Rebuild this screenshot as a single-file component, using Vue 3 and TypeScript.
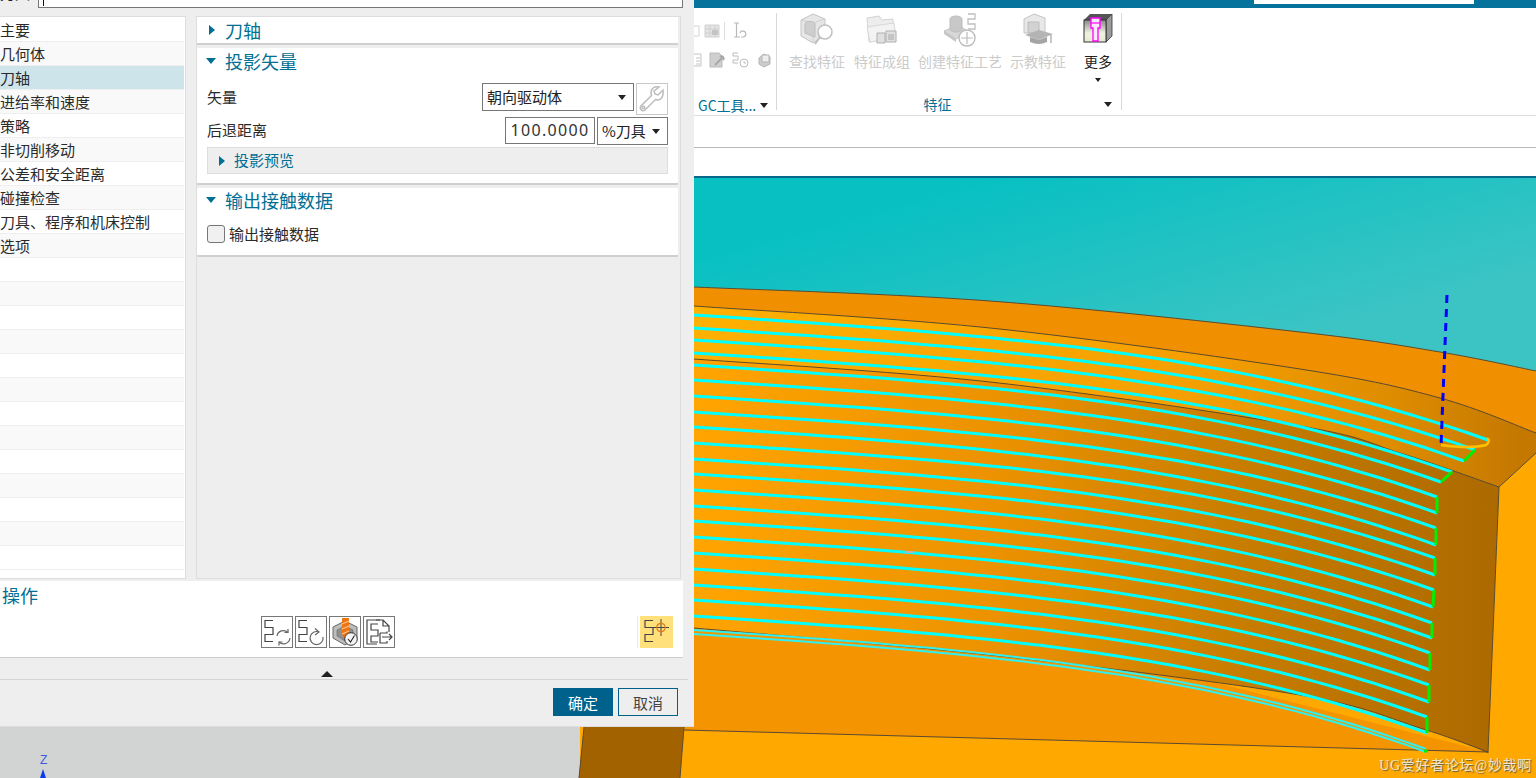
<script setup lang="ts">
type PathLine = { y0: number; x1: number; y1: number };
type Pt = [number, number];

const navItems = ['主要', '几何体', '刀轴', '进给率和速度', '策略', '非切削移动', '公差和安全距离', '碰撞检查', '刀具、程序和机床控制', '选项'];
const navRows = Array.from({ length: 23 }, (_, i) => navItems[i] ?? '');

const featureBtns = ['查找特征', '特征成组', '创建特征工艺', '示教特征'];

const treeD = 'M11 3.5H3V10.5H11V17.5H3V24.5H11';

// toolpath levels: start height at the dialog edge, then where each pass stops
const lines: PathLine[] = [
  { y0: 315, x1: 1488, y1: 440 },
  { y0: 328, x1: 1475, y1: 450 },
  { y0: 340, x1: 1464, y1: 461 },
  { y0: 353, x1: 1452, y1: 472 },
  { y0: 365, x1: 1441, y1: 482 },
  { y0: 380, x1: 1437, y1: 497 },
  { y0: 396, x1: 1437, y1: 513 },
  { y0: 412, x1: 1436, y1: 528 },
  { y0: 427, x1: 1436, y1: 545 },
  { y0: 443, x1: 1435, y1: 558 },
  { y0: 459, x1: 1435, y1: 575 },
  { y0: 474, x1: 1434, y1: 590 },
  { y0: 490, x1: 1433, y1: 607 },
  { y0: 506, x1: 1432, y1: 623 },
  { y0: 521, x1: 1432, y1: 638 },
  { y0: 537, x1: 1430, y1: 653 },
  { y0: 553, x1: 1430, y1: 670 },
  { y0: 569, x1: 1429, y1: 685 },
  { y0: 585, x1: 1429, y1: 702 },
  { y0: 600, x1: 1427, y1: 717 },
  { y0: 616, x1: 1427, y1: 733 },
];

function curve(y0: number, x1: number, y1: number): string {
  const pts: string[] = [];
  for (let i = 0; i <= 40; i++) {
    const t = i / 40;
    const f = 0.42 * t + 0.58 * Math.pow(t, 3.2);
    pts.push(`${(694 + (x1 - 694) * t).toFixed(1)} ${(y0 + (y1 - y0) * f).toFixed(1)}`);
  }
  return 'M' + pts.join('L');
}

// catmull-rom through the measured edge points, returned without the leading move
function smooth(p: Pt[]): string {
  let d = '';
  for (let i = 0; i < p.length - 1; i++) {
    const a = p[Math.max(i - 1, 0)];
    const b = p[i];
    const c = p[i + 1];
    const e = p[Math.min(i + 2, p.length - 1)];
    const c1 = [b[0] + (c[0] - a[0]) / 6, b[1] + (c[1] - a[1]) / 6];
    const c2 = [c[0] - (e[0] - b[0]) / 6, c[1] - (e[1] - b[1]) / 6];
    d += `C${c1[0].toFixed(1)} ${c1[1].toFixed(1)} ${c2[0].toFixed(1)} ${c2[1].toFixed(1)} ${c[0]} ${c[1]}`;
  }
  return d;
}

const edge1: Pt[] = [[694, 287], [990, 301], [1300, 332], [1440, 352], [1536, 371]];
const edge2: Pt[] = [[694, 306], [990, 328], [1300, 369], [1440, 398], [1536, 433]];
const edge3: Pt[] = [[694, 359], [990, 382], [1300, 426], [1400, 453], [1499, 487]];
const edge4: Pt[] = [[694, 628], [1000, 656], [1300, 695], [1420, 728], [1488, 752]];

const edge1D = `M694 287${smooth(edge1)}`;
const edge2D = `M694 306${smooth(edge2)}`;
const edge3D = `M694 359${smooth(edge3)}L1536 453`;
const edge4D = `M694 628${smooth(edge4)}`;
const bandD = `M694 287${smooth(edge1)}V470H694Z`;
const lipD = `M694 306${smooth(edge2)}V453L1499 487${smooth([...edge3].reverse())}Z`;
const wallD = `M694 359${smooth(edge3)}L1488 753${smooth([...edge4].reverse())}Z`;

const cyanPaths = lines.map(l => curve(l.y0, l.x1, l.y1));
const greenLinks = [1, 3, 5, 7, 9, 11, 13, 15, 17, 19].map(i => {
  const a = lines[i];
  const b = lines[i + 1];
  return `M${a.x1} ${a.y1}L${b.x1} ${b.y1}`;
});
const bunch = [curve(630, 1426, 749), curve(634, 1426, 752)];
</script>

<template>
  <div class="app">
    <!-- 3D viewport -->
    <svg class="viewport" width="1536" height="778" viewBox="0 0 1536 778">
      <defs>
        <linearGradient id="sky" x1="1000" y1="178" x2="1060" y2="400" gradientUnits="userSpaceOnUse">
          <stop offset="0" stop-color="#08c0c2" />
          <stop offset="1" stop-color="#3cc4c4" />
        </linearGradient>
        <linearGradient id="wall" x1="694" y1="0" x2="1490" y2="0" gradientUnits="userSpaceOnUse">
          <stop offset="0" stop-color="#ffa400" />
          <stop offset="0.38" stop-color="#ec9200" />
          <stop offset="0.7" stop-color="#c67c00" />
          <stop offset="1" stop-color="#ad6a00" />
        </linearGradient>
        <linearGradient id="lip" x1="694" y1="0" x2="1520" y2="0" gradientUnits="userSpaceOnUse">
          <stop offset="0" stop-color="#ffb000" />
          <stop offset="0.6" stop-color="#f5a000" />
          <stop offset="0.85" stop-color="#dd8c00" />
          <stop offset="1" stop-color="#c47800" />
        </linearGradient>
      </defs>
      <rect x="0" y="0" width="1536" height="778" fill="#d2d4d4" />
      <rect x="580" y="170" width="956" height="608" fill="#ffa800" />
      <rect x="694" y="170" width="842" height="320" fill="url(#sky)" />
      <path d="M584 727H684L680 778H579Z" fill="#a36200" />
      <path :d="bandD" fill="#f09000" />
      <path :d="lipD" fill="url(#lip)" />
      <path d="M684 730L694 628H1000L1488 752Z" fill="#f39400" />
      <path :d="wallD" fill="url(#wall)" />
      <path d="M1499 487L1536 453V778H1400L1488 753Z" fill="#ffa800" />
      <g fill="none" stroke="#5b4a30" stroke-width="1">
        <path :d="edge1D" />
        <path :d="edge2D" />
        <path :d="edge3D" />
        <path :d="edge4D" />
        <path d="M1499 487L1488 753" />
        <path d="M684 730L1488 752" />
        <path d="M684 727L680 778M584 727L579 778" />
      </g>
      <g fill="none" stroke="#00ffff" stroke-width="3">
        <path v-for="(d, i) in cyanPaths" :key="i" :d="d" />
      </g>
      <g fill="none" stroke="#30f0f0" stroke-width="2">
        <path v-for="(d, i) in bunch" :key="i" :d="d" />
      </g>
      <g fill="none" stroke="#00f000" stroke-width="3">
        <path v-for="(d, i) in greenLinks" :key="i" :d="d" />
        <path d="M1424 751H1428" />
      </g>
      <path d="M1441 445Q1470 449 1486 445Q1491 441 1487 438" fill="none" stroke="#ffc000" stroke-width="2.5" />
      <path d="M1447 295L1441 446" fill="none" stroke="#0000ff" stroke-width="3" stroke-dasharray="8 6" />
      <path d="M905 552H913" stroke="#ff9a9a" stroke-width="1.5" />
      <text x="40" y="764" font-size="12" fill="#3a5be0" font-family="Liberation Sans, sans-serif">Z</text>
      <path d="M43 769L46 778H40Z" fill="#0a3ce8" />
    </svg>
    <div class="watermark">UG爱好者论坛@妙哉啊</div>

    <!-- ribbon -->
    <header class="ribbon">
      <div class="title-bar"><div class="search"></div></div>
      <div class="tools">
        <div class="group gc">
          <div class="small-icons">
            <div class="icon-row first">
              <svg width="6" height="16" viewBox="0 0 6 16" fill="none" stroke="#d4d4d4"><path d="M0 3H5V13H0" /></svg>
              <svg width="16" height="16" viewBox="0 0 16 16"><path d="M1 2H15V14H1Z" fill="#e4e4e4" stroke="#d0d0d0" /><path d="M1 6H15M1 10H15M6 2V14M11 2V14" stroke="#cfcfcf" /><rect x="8" y="7" width="6" height="5" fill="#c4c4c4" /></svg>
              <i class="vline"></i>
              <svg width="17" height="18" viewBox="0 0 17 18" fill="none" stroke="#b8b8b8" stroke-width="1.2"><path d="M2 1H7M4.5 1V15M2 15H8" /><path d="M8 11a3 3 0 1 1 3 4h-2" /></svg>
            </div>
            <div class="icon-row">
              <svg width="8" height="16" viewBox="0 0 8 16" fill="none" stroke="#c4c4c4"><path d="M0 2H7V14H0M2 6H6M2 9H6M2 12H6" /></svg>
              <svg width="16" height="16" viewBox="0 0 16 16"><path d="M1 1H10L13 4V15H1Z" fill="#cfcfcf" stroke="#bbb" /><path d="M6 13L13 6M11 5a2 2 0 0 1 3 3" fill="none" stroke="#a8a8a8" stroke-width="2" /></svg>
              <svg width="17" height="16" viewBox="0 0 17 16" fill="none" stroke="#bdbdbd"><path d="M6 1H1V4H6V8H1V11H6" /><circle cx="12" cy="11" r="4" /><path d="M12 9V11H14" /></svg>
              <svg width="16" height="16" viewBox="0 0 16 16"><path d="M3 6L8 2L14 5V12L8 15L3 12Z" fill="#cdcdcd" stroke="#b5b5b5" /><path d="M6 3H13V10H6Z" fill="#eee" stroke="#b5b5b5" /></svg>
            </div>
          </div>
          <div class="group-label">
            <span>GC工具...</span><i class="caret"></i>
          </div>
        </div>
        <div class="group feature">
          <div class="big-row">
            <div v-for="(b, i) in featureBtns" :key="b" class="big-btn">
              <svg v-if="i === 0" width="34" height="34" viewBox="0 0 34 34">
                <path d="M1 7L13 1L25 6V22L13 30L1 23Z" fill="#e6e6e6" stroke="#c4c4c4" />
                <path d="M13 30V10L25 6M1 7L13 10" fill="none" stroke="#cfcfcf" />
                <path d="M5 11a5 3 0 0 1 10 1V24L5 20Z" fill="#cfcfcf" stroke="#bdbdbd" />
                <circle cx="25" cy="19" r="7" fill="#fff" stroke="#c0c0c0" stroke-width="1.5" />
                <path d="M20 24L15 31" stroke="#c0c0c0" stroke-width="2" />
              </svg>
              <svg v-else-if="i === 1" width="34" height="34" viewBox="0 0 34 34">
                <path d="M2 5L14 3L17 7L28 6L29 25L4 29Z" fill="#ededed" stroke="#d4d4d4" />
                <path d="M2 14L29 10L31 25L5 29Z" fill="#f3f3f3" stroke="#d8d8d8" />
                <path d="M12 20H20V30H12Z" fill="#e0e0e0" stroke="#b0b0b0" />
                <path d="M21 18H31V29H21Z" fill="#e0e0e0" stroke="#b0b0b0" />
                <path d="M23 21H29V27H23Z" fill="#c4c4c4" />
              </svg>
              <svg v-else-if="i === 2" width="36" height="34" viewBox="0 0 36 34">
                <path d="M2 18L16 12L27 19L14 26Z" fill="#d8d8d8" stroke="#c4c4c4" />
                <path d="M2 18V21L14 29V26Z" fill="#c6c6c6" />
                <path d="M8 6a6 3 0 0 1 12 0V16a6 3 0 0 1-12 0Z" fill="#c8c8c8" stroke="#bebebe" />
                <path d="M26 1H33V6H26V11H33V16H26" fill="none" stroke="#c0c0c0" stroke-width="1.3" />
                <circle cx="25" cy="25" r="8" fill="#fff" stroke="#bcbcbc" stroke-width="1.4" />
                <path d="M25 19V31M19 25H31" stroke="#bcbcbc" stroke-width="1.2" />
              </svg>
              <svg v-else width="34" height="34" viewBox="0 0 34 34">
                <path d="M3 6L13 1L24 5V20H3Z" fill="#e8e8e8" stroke="#c4c4c4" />
                <path d="M7 9H18V20H7Z" fill="#d2d2d2" stroke="#bcbcbc" />
                <path d="M4 22L18 17L32 21L18 27Z" fill="#b4b4b4" />
                <path d="M9 24V29Q18 33 26 29V24L18 27Z" fill="#a4a4a4" />
                <path d="M30 22V30" stroke="#b4b4b4" stroke-width="1.5" />
              </svg>
              <span>{{ b }}</span>
            </div>
            <div class="big-btn more">
              <svg width="32" height="32" viewBox="0 0 32 32">
                <defs>
                  <linearGradient id="boxFace" x1="0" y1="0" x2="0" y2="1">
                    <stop offset="0" stop-color="#888" />
                    <stop offset="0.6" stop-color="#f0f2e0" />
                    <stop offset="1" stop-color="#e6e8d0" />
                  </linearGradient>
                </defs>
                <path d="M2 7L8 1H30L24 7Z" fill="#555" />
                <path d="M24 7L30 1V23L24 29Z" fill="#9a9a9a" stroke="#333" stroke-width="0.8" />
                <rect x="2" y="7" width="22" height="22" fill="url(#boxFace)" stroke="#333" stroke-width="1" />
                <path d="M9 5H18V15H16V28H11V15H9Z" fill="#f8e8f8" stroke="#ff00ff" stroke-width="1.3" />
                <path d="M9 10H18" stroke="#ff00ff" stroke-width="1.2" />
              </svg>
              <span>更多</span>
              <i class="caret small"></i>
            </div>
          </div>
          <div class="group-label right">
            <span>特征</span><i class="caret"></i>
          </div>
        </div>
      </div>
      <div class="strip"></div>
      <div class="strip last"></div>
    </header>

    <!-- operation dialog -->
    <section class="dialog">
      <div class="name-row">
        <span class="name-label">刀具</span>
        <div class="name-input"><i class="text-caret"></i></div>
      </div>
      <div class="body">
        <ul class="nav">
          <li v-for="(item, i) in navRows" :key="i" :class="{ on: i === 2, alt: i % 2 === 1 }">{{ item }}</li>
        </ul>
        <div class="pane">
          <div class="sec collapsed">
            <h3 class="sec-head"><i class="tri-right"></i>刀轴</h3>
          </div>
          <div class="sec vector">
            <h3 class="sec-head"><i class="tri-down"></i>投影矢量</h3>
            <div class="field first">
              <label>矢量</label>
              <div class="controls">
                <div class="select wide">朝向驱动体<i class="caret"></i></div>
                <div class="wrench">
                  <svg width="28" height="28" viewBox="0 0 28 28" fill="none" stroke="#bcbcbc" stroke-width="1.5">
                    <path d="M25 5L20 10L17 9L16 6L21 2C17 1 13 3 13 8L13.5 10.5L3 21C1 24 4 27 7 25L17.5 14.5C22 16 26 13 25 5Z" />
                    <circle cx="5.5" cy="22.5" r="1.3" />
                  </svg>
                </div>
              </div>
            </div>
            <div class="field">
              <label>后退距离</label>
              <div class="controls">
                <div class="num">100.0000</div>
                <div class="select unit">%刀具<i class="caret"></i></div>
              </div>
            </div>
            <div class="preview"><i class="tri-right small"></i>投影预览</div>
          </div>
          <div class="sec output">
            <h3 class="sec-head"><i class="tri-down"></i>输出接触数据</h3>
            <div class="check-row"><span class="check"></span>输出接触数据</div>
          </div>
        </div>
      </div>
      <div class="ops">
        <h3>操作</h3>
        <div class="ops-row">
          <button class="op">
            <svg width="30" height="30" viewBox="0 0 30 30" fill="none" stroke="#444" stroke-width="1.2">
              <path :d="treeD" />
              <path d="M15 19a6.5 6.5 0 0 1 11-3.5M28 21a6.5 6.5 0 0 1-11 4" stroke="#666" />
              <path d="M26 12V15.5H22.5M17 28.5V25H20.5" stroke="#666" />
            </svg>
          </button>
          <button class="op">
            <svg width="30" height="30" viewBox="0 0 30 30" fill="none" stroke="#444" stroke-width="1.2">
              <path :d="treeD" />
              <path d="M23 15A6.5 6.5 0 1 0 27 20" stroke="#666" />
              <path d="M19 11.5L23 15L19 18" stroke="#666" />
            </svg>
          </button>
          <button class="op">
            <svg width="30" height="30" viewBox="0 0 30 30">
              <path d="M3 10L15 4L27 10V21L15 28L3 21Z" fill="#bdbdbd" stroke="#666" />
              <path d="M7 13L15 9L23 13V19L15 24L7 19Z" fill="#8f8f8f" stroke="#666" stroke-width="0.6" />
              <path d="M12 1H19V18L15 22L12 18Z" fill="#ee7410" />
              <path d="M12 7L19 4M12 12L19 9M12 17L19 14" stroke="#ffc48a" stroke-width="1.2" />
              <circle cx="21" cy="22" r="6.3" fill="#f4f4f4" stroke="#333" />
              <path d="M18 22L20.5 25L24.5 18.5" fill="none" stroke="#222" stroke-width="1.1" />
            </svg>
          </button>
          <button class="op">
            <svg width="30" height="30" viewBox="0 0 30 30" fill="none" stroke="#444" stroke-width="1.2">
              <path d="M16 3H3V27H13" />
              <path d="M12 3H19L25 9V15M19 3V9H25" />
              <path d="M14 7H7V13H14V19H7V25H14" />
              <path d="M16 16H23V14.5M16 16V26H23V24M18 20H28M25 17L28 20L25 23" />
            </svg>
          </button>
          <button class="op active">
            <svg width="30" height="30" viewBox="0 0 30 30" fill="none">
              <path :d="treeD" stroke="#444" stroke-width="1.2" />
              <path d="M11 10.5H27M19 2V19" stroke="#444" stroke-width="1" />
              <circle cx="19" cy="10.5" r="4.2" stroke="#e07a12" stroke-width="1.2" />
            </svg>
          </button>
        </div>
      </div>
      <div class="fold"><i class="tri-up"></i></div>
      <div class="footer">
        <button class="btn primary">确定</button>
        <button class="btn">取消</button>
      </div>
    </section>
  </div>
</template>

<style scoped>
.app {
  position: relative;
  width: 1536px;
  height: 778px;
  overflow: hidden;
  font-family: "Noto Sans CJK SC", "Noto Sans", sans-serif;
  font-size: 15px;
  color: #333;
}
.viewport { position: absolute; left: 0; top: 0; display: block; }
.watermark {
  position: absolute;
  right: 4px;
  bottom: 3px;
  font-family: "Liberation Serif", "Noto Sans CJK SC", serif;
  font-size: 14px;
  letter-spacing: 0.7px;
  line-height: 18px;
  color: #efe6cc;
  text-shadow: 1px 1px 1px #6a5a3a;
}

/* ribbon */
.ribbon {
  position: absolute;
  left: 694px;
  right: 0;
  top: 0;
  height: 178px;
  background: #fff;
  border-bottom: 2px solid #06698c;
  box-sizing: border-box;
}
.title-bar {
  height: 8px;
  background: #05739c;
  padding-left: 560px;
}
.search { width: 220px; height: 4px; background: #fff; }
.tools {
  display: flex;
  height: 107px;
  border-bottom: 1px solid #ddd;
}
.group {
  position: relative;
  display: flex;
  flex-direction: column;
  margin-top: 5px;
  height: 97px;
  border-right: 1px solid #d8d8d8;
}
.gc { width: 83px; box-sizing: border-box; }
.feature { width: 344px; }
.small-icons { height: 82px; flex: none; }
.icon-row { display: flex; gap: 7px; height: 22px; align-items: center; }
.icon-row.first { height: 36px; gap: 4px; }
.vline { width: 1px; height: 18px; background: #ddd; margin-right: 3px; }
.group-label {
  display: flex;
  flex: none;
  align-items: center;
  justify-content: center;
  gap: 5px;
  font-size: 14px;
  line-height: 20px;
  color: #006f94;
  white-space: nowrap;
}
.gc .group-label { justify-content: flex-start; padding-left: 4px; gap: 4px; }
.group-label.right {
  position: relative;
  margin-top: auto;
  margin-bottom: -4px;
  padding-right: 23px;
}
.group-label.right .caret { position: absolute; right: 9px; top: 8px; }
.caret {
  display: inline-block;
  width: 0;
  height: 0;
  border-left: 4.5px solid transparent;
  border-right: 4.5px solid transparent;
  border-top: 5px solid #222;
}
.caret.small { border-left-width: 3.5px; border-right-width: 3.5px; border-top-width: 4px; margin-top: 7px; }
.big-row { display: flex; padding-left: 12px; gap: 8px; }
.big-row .big-btn:first-child { margin-right: 1px; }
.big-btn {
  display: flex;
  flex-direction: column;
  align-items: center;
  font-size: 14px;
  color: #cbcbcb;
  white-space: nowrap;
  line-height: 20px;
}
.big-btn svg { height: 34px; margin-bottom: 4px; }
.big-btn.more { margin-left: 8px; color: #222; }
.big-btn.more svg { height: 32px; margin-bottom: 6px; }
.strip { height: 31px; border-bottom: 1px solid #b8b8b8; }
.strip.last { height: 28px; border-bottom: 0; }

/* dialog */
.dialog {
  position: absolute;
  left: 0;
  top: 0;
  width: 694px;
  height: 727px;
  background: #eee;
  border-bottom: 1px solid #ddd;
  box-sizing: border-box;
  overflow: hidden;
}
.name-row { height: 8px; display: flex; position: relative; padding-left: 38px; }
.name-label {
  position: absolute;
  left: 0;
  top: -17px;
  line-height: 20px;
  color: #222;
}
.name-input {
  width: 645px;
  height: 8px;
  box-sizing: border-box;
  background: #fff;
  border: 1px solid #777;
  border-top: 0;
  padding-left: 4px;
}
.text-caret { display: block; width: 1px; height: 6px; background: #111; }
.body {
  display: flex;
  gap: 10px;
  margin-top: 8px;
  height: 563px;
}
.nav {
  list-style: none;
  margin: 0;
  padding: 1px 1px 0 0;
  width: 186px;
  box-sizing: border-box;
  background: #fff;
  border: 1px solid #ddd;
  border-left: 0;
  overflow: hidden;
}
.nav li {
  height: 24px;
  box-sizing: border-box;
  line-height: 24px;
  font-size: 15px;
  color: #2a2a2a;
  background: #fff;
  border-bottom: 1px solid #eee;
  white-space: nowrap;
}
.nav li.alt { background: #f9f9f9; }
.nav li.on { background: #cce4ea; }
.pane {
  width: 485px;
  box-sizing: border-box;
  border: 1px solid #ddd;
  padding-right: 2px;
  background: #eee;
}
.sec { background: #fff; border-bottom: 2px solid #d0d0d0; margin-bottom: 3px; }
.sec.collapsed { height: 28px; box-sizing: border-box; }
.sec.vector { height: 137px; box-sizing: border-box; }
.sec.output { height: 69px; box-sizing: border-box; }
.sec-head {
  display: flex;
  align-items: center;
  margin: 0;
  height: 28px;
  padding: 0 0 2px 9px;
  box-sizing: border-box;
  font-size: 18px;
  font-weight: 400;
  color: #006f94;
}
.collapsed .sec-head { padding-bottom: 3px; }
.output .sec-head { padding-bottom: 4px; }
.tri-right {
  width: 0;
  height: 0;
  margin-right: 10px;
  margin-left: 3px;
  border-top: 5.5px solid transparent;
  border-bottom: 5.5px solid transparent;
  border-left: 6px solid #006f94;
}
.tri-right.small { margin-left: 0; margin-right: 9px; border-top-width: 5px; border-bottom-width: 5px; }
.tri-down {
  width: 0;
  height: 0;
  margin-right: 9px;
  border-left: 5.5px solid transparent;
  border-right: 5.5px solid transparent;
  border-top: 6px solid #006f94;
}
.field {
  display: flex;
  align-items: flex-start;
  justify-content: space-between;
  padding: 0 10px;
  height: 28px;
  margin-top: 2px;
}
.field.first { height: 32px; margin-top: 7px; }
.field label { line-height: 27px; font-size: 15px; color: #2a2a2a; }
.field:not(.first) label { line-height: 25px; }
.controls { display: flex; gap: 2px; align-items: flex-start; }
.select {
  display: flex;
  align-items: center;
  justify-content: space-between;
  height: 28px;
  box-sizing: border-box;
  border: 1px solid #777;
  padding: 0 7px 2px 4px;
  background: #fff;
  font-size: 15px;
  color: #222;
}
.select .caret { margin-top: 2px; }
.select.wide { width: 152px; }
.select.unit { width: 71px; }
.wrench {
  width: 32px;
  height: 32px;
  box-sizing: border-box;
  border: 1px solid #c8c8c8;
  display: flex;
  align-items: center;
  justify-content: center;
}
.num {
  width: 90px;
  height: 27px;
  box-sizing: border-box;
  border: 1px solid #777;
  text-align: center;
  line-height: 24px;
  font-family: "Noto Sans", sans-serif;
  font-size: 16px;
  letter-spacing: 1.3px;
  color: #333;
}
.preview {
  display: flex;
  align-items: center;
  height: 27px;
  box-sizing: border-box;
  margin: 2px 10px 0;
  padding: 0 0 3px 11px;
  background: #eee;
  border: 1px solid #ddd;
  font-size: 15px;
  color: #006f94;
}
.preview .tri-right { margin-top: 3px; }
.check-row {
  display: flex;
  align-items: center;
  padding-left: 10px;
  margin-top: 9px;
  font-size: 15px;
  line-height: 18px;
  color: #2a2a2a;
}
.check {
  width: 18px;
  height: 18px;
  box-sizing: border-box;
  margin-right: 4px;
  border: 1px solid #777;
  border-radius: 3px;
  background: #f0f0f0;
}
.ops {
  width: 683px;
  height: 77px;
  box-sizing: border-box;
  margin-top: 2px;
  background: #fff;
  border-bottom: 1px solid #ccc;
}
.ops h3 {
  margin: 0;
  height: 35px;
  padding-left: 2px;
  font-size: 18px;
  font-weight: 400;
  line-height: 28px;
  color: #006f94;
}
.ops-row { display: flex; gap: 2px; padding-left: 261px; }
.op {
  width: 32px;
  height: 32px;
  padding: 0;
  box-sizing: border-box;
  display: flex;
  align-items: center;
  justify-content: center;
  background: #fff;
  border: 1px solid #777;
}
.op.active {
  margin-left: auto;
  margin-right: 10px;
  width: 33px;
  background: #ffe07a;
  border: 0;
  box-shadow: -2px 0 0 #fff, -3px 0 0 #ffe9a8;
}
.fold {
  display: flex;
  justify-content: flex-start;
  align-items: flex-end;
  width: 688px;
  height: 22px;
  box-sizing: border-box;
  padding: 0 0 1px 321px;
  border-bottom: 1px solid #d4d4d4;
}
.tri-up {
  width: 0;
  height: 0;
  margin-bottom: 1px;
  border-left: 6px solid transparent;
  border-right: 6px solid transparent;
  border-bottom: 6px solid #222;
}
.footer {
  display: flex;
  justify-content: flex-end;
  gap: 5px;
  padding: 8px 16px 0 0;
}
.btn {
  width: 60px;
  height: 28px;
  padding: 0;
  box-sizing: border-box;
  border: 1px solid #00628c;
  background: #eee;
  font-family: inherit;
  font-size: 15px;
  color: #444;
}
.btn.primary { background: #00628c; color: #fff; }
</style>
